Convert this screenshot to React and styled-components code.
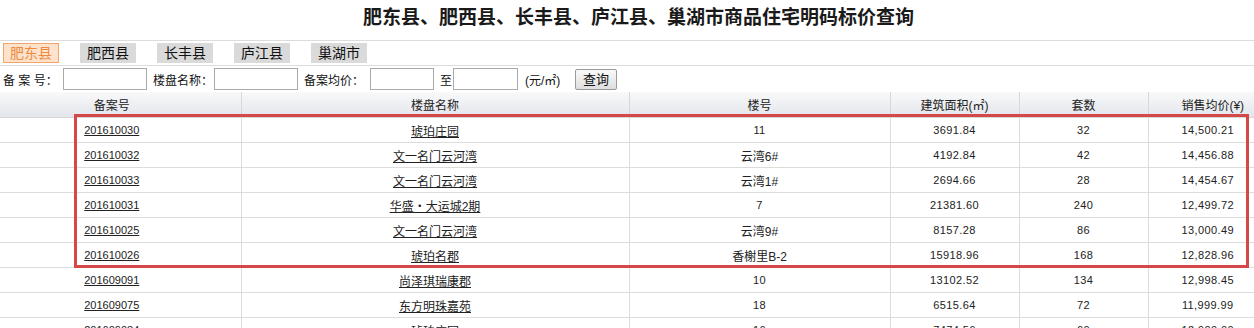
import React from "react";
import styled, { createGlobalStyle } from "styled-components";

const Global = createGlobalStyle`
  html, body { margin: 0; padding: 0; background: #fff; overflow: hidden; }
  body { font-family: "Liberation Sans", "Noto Sans CJK SC", sans-serif; font-size: 12px; color: #222; }
`;

const Page = styled.div`
  width: 1277px;
`;

const Title = styled.h1`
  margin: 0;
  height: 40px;
  line-height: 36px;
  text-align: center;
  font-size: 19px;
  font-weight: bold;
  color: #1a1a1a;
  font-family: "Liberation Serif", "Noto Sans CJK SC", serif;
  border-bottom: 1px solid #dcdcdc;
`;

const Tabs = styled.div`
  display: flex;
  align-items: center;
  gap: 21px;
  height: 24px;
  padding-left: 3px;
  border-bottom: 1px solid #dcdcdc;
`;

const Tab = styled.span`
  box-sizing: border-box;
  width: 56px;
  height: 20px;
  line-height: 18px;
  text-align: center;
  font-size: 14px;
  color: ${p => (p.$active ? "#ef8a3c" : "#111")};
  background: ${p => (p.$active ? "#fde3cc" : "#dadada")};
  border: 1px solid ${p => (p.$active ? "#f2a46a" : "#dadada")};
`;

const Search = styled.div`
  display: flex;
  align-items: center;
  height: 26px;
  padding-left: 3px;
  font-size: 12px;
  color: #111;
`;

const Label = styled.span`
  display: inline-block;
  flex: none;
  margin-right: ${p => p.$mr || 0}px;
  margin-left: ${p => p.$ml || 0}px;
  ${p => (p.$w ? `width: ${p.$w}px;` : "")}
  white-space: pre;
`;

const Input = styled.span`
  box-sizing: border-box;
  display: inline-block;
  flex: none;
  width: ${p => p.$w}px;
  height: 22px;
  border: 1px solid #a9a9a9;
  background: #fff;
`;

const Button = styled.span`
  box-sizing: border-box;
  display: inline-block;
  flex: none;
  width: 42px;
  height: 21px;
  line-height: 19px;
  text-align: center;
  font-size: 13px;
  border: 1px solid #9a9a9a;
  border-radius: 2px;
  background: linear-gradient(#fafafa, #dedede);
  margin-left: 8px;
`;

const TableWrap = styled.div`
  position: relative;
  width: 1277px;
`;

const Table = styled.table`
  width: 1277px;
  border-collapse: collapse;
  table-layout: fixed;
`;

const Th = styled.th`
  height: 25px;
  padding: 0;
  font-weight: normal;
  font-size: 12px;
  color: #222;
  background: linear-gradient(#f9f9fa, #e2e5eb);
  border-left: 1px solid #d8d8d8;
  border-bottom: 1px solid #d6d6d6;
  text-align: center;
  padding-right: ${p => p.$pr || 0}px;
  &:first-child { border-left: none; }
`;

const Td = styled.td`
  height: 24px;
  padding: 0;
  border-left: 1px solid #dcdcdc;
  border-bottom: 1px solid #dcdcdc;
  text-align: center;
  font-size: ${p => (p.$num ? "11px" : "12px")};
  letter-spacing: ${p => (p.$num ? "0.4px" : "0")};
  color: #222;
  padding-right: ${p => p.$pr || 0}px;
  &:first-child { border-left: none; }
`;

const Link = styled.a`
  color: #222;
  text-decoration: underline;
  font-size: ${p => (p.$num ? "11px" : "12px")};
`;

const Highlight = styled.div`
  position: absolute;
  left: 74px;
  top: 22px;
  width: 1175px;
  height: 154px;
  box-sizing: border-box;
  border: 3px solid #d64848;
  pointer-events: none;
`;

const rows = [
  ["201610030", "琥珀庄园", "11", "3691.84", "32", "14,500.21"],
  ["201610032", "文一名门云河湾", "云湾6#", "4192.84", "42", "14,456.88"],
  ["201610033", "文一名门云河湾", "云湾1#", "2694.66", "28", "14,454.67"],
  ["201610031", "华盛・大运城2期", "7", "21381.60", "240", "12,499.72"],
  ["201610025", "文一名门云河湾", "云湾9#", "8157.28", "86", "13,000.49"],
  ["201610026", "琥珀名郡", "香榭里B-2", "15918.96", "168", "12,828.96"],
  ["201609091", "尚泽琪瑞康郡", "10", "13102.52", "134", "12,998.45"],
  ["201609075", "东方明珠嘉苑", "18", "6515.64", "72", "11,999.99"],
  ["201609084", "琥珀庄园", "16", "7474.56", "60", "12,900.00"],
];

const tabs = ["肥东县", "肥西县", "长丰县", "庐江县", "巢湖市"];

export default function App() {
  return (
    <Page>
      <Global />
      <Title>肥东县、肥西县、长丰县、庐江县、巢湖市商品住宅明码标价查询</Title>
      <Tabs>
        {tabs.map((t, i) => (
          <Tab key={t} $active={i === 0}>{t}</Tab>
        ))}
      </Tabs>
      <Search>
        <Label $w={60}>{"备 案 号："}</Label>
        <Input $w={84} />
        <Label $ml={6} $w={61}>楼盘名称：</Label>
        <Input $w={84} />
        <Label $ml={6} $w={66}>备案均价：</Label>
        <Input $w={64} />
        <Label $ml={6} $w={13}>至</Label>
        <Input $w={65} />
        <Label $ml={7} $w={42}>(元/㎡)</Label>
        <Button>查询</Button>
      </Search>
      <TableWrap>
        <Table>
          <colgroup>
            <col style={{ width: 241 }} />
            <col style={{ width: 388 }} />
            <col style={{ width: 261 }} />
            <col style={{ width: 129 }} />
            <col style={{ width: 129 }} />
            <col style={{ width: 129 }} />
          </colgroup>
          <thead>
            <tr>
              <Th $pr={17}>备案号</Th>
              <Th>楼盘名称</Th>
              <Th>楼号</Th>
              <Th>建筑面积(㎡)</Th>
              <Th>套数</Th>
              <Th>销售均价(¥)</Th>
            </tr>
          </thead>
          <tbody>
            {rows.map(r => (
              <tr key={r[0]}>
                <Td $pr={17}><Link $num href="#">{r[0]}</Link></Td>
                <Td><Link href="#">{r[1]}</Link></Td>
                <Td $num={/^\d+$/.test(r[2])}>{r[2]}</Td>
                <Td $num>{r[3]}</Td>
                <Td $num>{r[4]}</Td>
                <Td $num $pr={10}>{r[5]}</Td>
              </tr>
            ))}
          </tbody>
        </Table>
        <Highlight />
      </TableWrap>
    </Page>
  );
}
